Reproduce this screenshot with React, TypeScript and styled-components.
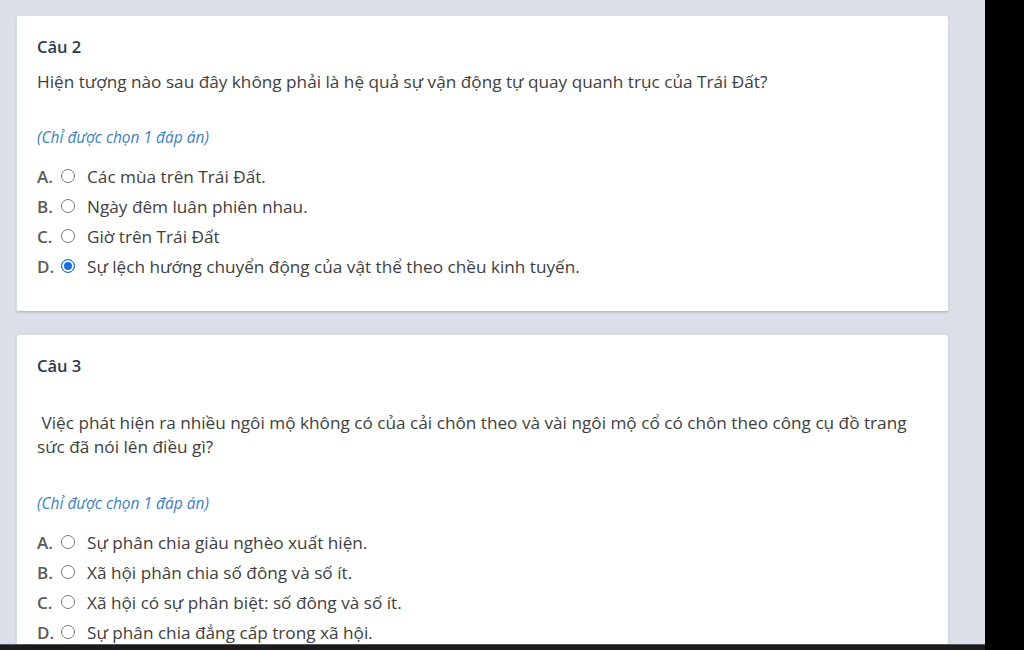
import React from "react"
import styled, { createGlobalStyle } from "styled-components"

type OptionType = {
    key: string
    text: string
    checked?: boolean
}

type QuestionPropsType = {
    title: string
    question: string
    options: OptionType[]
    spaced?: boolean
}

const GlobalStyle = createGlobalStyle`
    html, body {
        margin: 0;
        padding: 0;
        background: #000;
    }
    body {
        font-family: "Open Sans", "Noto Sans", sans-serif;
    }
`

const Question = (props: QuestionPropsType) => {
    return (
        <Card>
            <Title>{props.title}</Title>
            <QuestionText $spaced={props.spaced}>{props.question}</QuestionText>
            <Hint $spaced={props.spaced}>(Chỉ được chọn 1 đáp án)</Hint>
            <Options>
                {props.options.map((o) => (
                    <OptionRow key={o.key}>
                        <Letter>{o.key}.</Letter>
                        <Radio $checked={!!o.checked} />
                        <OptionText>{o.text}</OptionText>
                    </OptionRow>
                ))}
            </Options>
        </Card>
    )
}

export default function App() {
    return (
        <>
            <GlobalStyle />
            <Screen>
                <Main>
                    <Scroll>
                        <Question
                            title="Câu 2"
                            question="Hiện tượng nào sau đây không phải là hệ quả sự vận động tự quay quanh trục của Trái Đất?"
                            options={[
                                { key: "A", text: "Các mùa trên Trái Đất." },
                                { key: "B", text: "Ngày đêm luân phiên nhau." },
                                { key: "C", text: "Giờ trên Trái Đất" },
                                { key: "D", text: "Sự lệch hướng chuyển động của vật thể theo chều kinh tuyến.", checked: true },
                            ]}
                        />
                        <Question
                            spaced
                            title="Câu 3"
                            question={"\u00a0Việc phát hiện ra nhiều ngôi mộ không có của cải chôn theo và vài ngôi mộ cổ có chôn theo công cụ đồ trang sức đã nói lên điều gì?"}
                            options={[
                                { key: "A", text: "Sự phân chia giàu nghèo xuất hiện." },
                                { key: "B", text: "Xã hội phân chia số đông và số ít." },
                                { key: "C", text: "Xã hội có sự phân biệt: số đông và số ít." },
                                { key: "D", text: "Sự phân chia đẳng cấp trong xã hội." },
                            ]}
                        />
                    </Scroll>
                    <BottomBar />
                </Main>
                <SideBlack />
            </Screen>
        </>
    )
}

const Screen = styled.div`
    display: flex;
    width: 1024px;
    height: 650px;
    overflow: hidden;
`
const Main = styled.div`
    width: 985px;
    display: flex;
    flex-direction: column;
    background: #dcdfe8;
`
const Scroll = styled.div`
    flex: 1;
    overflow: hidden;
    padding: 15px 36px 0 16px;
    display: flex;
    flex-direction: column;
    gap: 22px;
`
const BottomBar = styled.div`
    height: 5px;
    background: #1c1c1e;
    border-top: 1px solid #555;
`
const SideBlack = styled.div`
    flex: 1;
    background: #000;
`
const Card = styled.div`
    flex-shrink: 0;
    background: #fff;
    border: 1px solid #d4ddd6;
    border-bottom-color: #a9cdb0;
    border-radius: 3px;
    box-shadow: 0 1px 2px rgba(120, 170, 130, 0.35);
    padding: 20px 20px 30px 20px;
`
const Title = styled.div`
    font-size: 16.5px;
    font-weight: 600;
    color: #2b3a4f;
    line-height: 22px;
`
const QuestionText = styled.div<{ $spaced?: boolean }>`
    margin-top: ${(p) => (p.$spaced ? "34px" : "12px")};
    font-size: 17.2px;
    line-height: 24px;
    color: #404040;
`
const Hint = styled.div<{ $spaced?: boolean }>`
    margin-top: ${(p) => (p.$spaced ? "33px" : "32px")};
    font-size: 15.5px;
    line-height: 22px;
    font-style: italic;
    color: #3d7fc1;
`
const Options = styled.div`
    margin-top: 13px;
    display: flex;
    flex-direction: column;
`
const OptionRow = styled.div`
    display: flex;
    align-items: center;
    height: 30px;
`
const Letter = styled.span`
    width: 24px;
    font-size: 17px;
    font-weight: 600;
    color: #5a5a5a;
`
const Radio = styled.span<{ $checked: boolean }>`
    box-sizing: border-box;
    width: 14px;
    height: 14px;
    border-radius: 50%;
    margin: 0 12px 0 0;
    border: ${(p) => (p.$checked ? "1.5px solid #1a6fe0" : "1px solid #7a7a7a")};
    background: ${(p) => (p.$checked ? "#1a6fe0" : "#fff")};
    box-shadow: ${(p) => (p.$checked ? "inset 0 0 0 2px #fff" : "none")};
`
const OptionText = styled.span`
    font-size: 17.2px;
    color: #404040;
`
